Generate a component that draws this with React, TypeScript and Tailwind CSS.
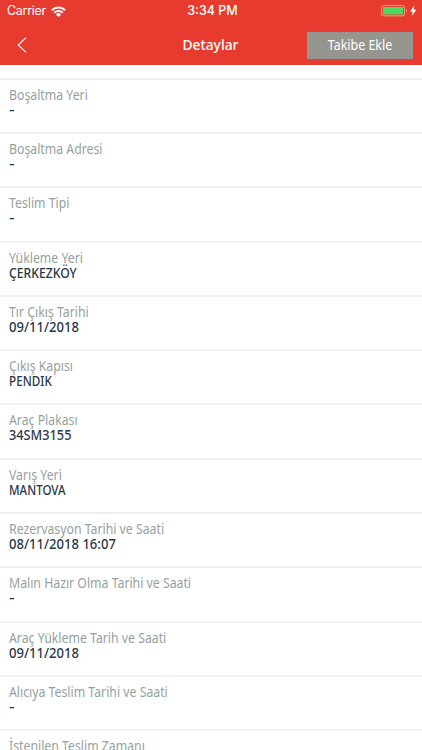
import { ReactNode } from 'react'
import clsx from 'clsx'

interface DetailItem {
  label: string
  value: string
  valueClass?: string
}

const DATE = 'scale-x-[0.935]'
const EMPTY = 'scale-x-[1.25]'

const details: DetailItem[] = [
  { label: 'Boşaltma Yeri', value: '-', valueClass: EMPTY },
  { label: 'Boşaltma Adresi', value: '-', valueClass: EMPTY },
  { label: 'Teslim Tipi', value: '-', valueClass: EMPTY },
  { label: 'Yükleme Yeri', value: 'ÇERKEZKÖY', valueClass: 'scale-x-[0.87]' },
  { label: 'Tır Çıkış Tarihi', value: '09/11/2018', valueClass: DATE },
  { label: 'Çıkış Kapısı', value: 'PENDIK', valueClass: 'scale-x-[0.835]' },
  { label: 'Araç Plakası', value: '34SM3155', valueClass: 'scale-x-[0.91]' },
  { label: 'Varış Yeri', value: 'MANTOVA', valueClass: 'scale-x-[0.825]' },
  { label: 'Rezervasyon Tarihi ve Saati', value: '08/11/2018 16:07', valueClass: DATE },
  { label: 'Malın Hazır Olma Tarihi ve Saati', value: '-', valueClass: EMPTY },
  { label: 'Araç Yükleme Tarih ve Saati', value: '09/11/2018', valueClass: DATE },
  { label: 'Alıcıya Teslim Tarihi ve Saati', value: '-', valueClass: EMPTY },
  { label: 'İstenilen Teslim Zamanı', value: '-', valueClass: EMPTY },
]

function WifiIcon() {
  return (
    <svg width="15" height="11" viewBox="0 0 15 11" fill="none" stroke="white" strokeWidth="2.1">
      <path d="M.9 4.2a9.3 9.3 0 0 1 13.2 0" />
      <path d="M3.3 6.8a5.9 5.9 0 0 1 8.4 0" />
      <path d="M7.5 11 5 8.4a3.5 3.5 0 0 1 5 0z" fill="white" stroke="none" />
    </svg>
  )
}

function BatteryIcon() {
  return (
    <svg width="37" height="12" viewBox="0 0 37 12" fill="none">
      <rect x="0.5" y="0.5" width="23" height="10.4" rx="2.3" stroke="#f6a77f" />
      <rect x="2" y="2" width="20" height="7.4" rx="1" fill="#4cd964" />
      <path d="M25 3.8c1.1.4 1.1 3.4 0 3.8z" fill="#f6a77f" />
      <path d="M33.4.4 29.1 6.4h2.6L30.8 11l4.6-6.2h-2.7z" fill="white" />
    </svg>
  )
}

function StatusBar() {
  return (
    <div className="grid h-[22px] grid-cols-3 items-center pr-[4px] pl-[7px] font-['Inter',sans-serif] text-[12.5px] text-white">
      <div className="flex items-center gap-[4px]">
        <span className="w-[40px] pt-px tracking-[-0.3px]">Carrier</span>
        <WifiIcon />
      </div>
      <span className="pt-px text-center font-medium">3:34 PM</span>
      <div className="flex justify-end">
        <BatteryIcon />
      </div>
    </div>
  )
}

function Header({ children }: { children: ReactNode }) {
  return (
    <header className="h-[65px] shrink-0 bg-[#e63b2e]">
      <StatusBar />
      <div className="grid h-[43px] grid-cols-[1fr_auto_1fr] items-center pt-[3px] pr-[9px] pl-[17px] text-white">
        <button type="button" aria-label="Geri" className="w-fit">
          <svg width="10" height="16" viewBox="0 0 10 16" fill="none" stroke="white" strokeWidth="1.1">
            <path d="M9 .6 1.2 8 9 15.4" />
          </svg>
        </button>
        <h1 className="-mt-px mr-[10px] scale-x-[0.92] text-[15px] font-medium">{children}</h1>
        <button type="button" className="h-[27px] w-[106px] justify-self-end bg-[#979590] text-[14px]">
          <span className="block scale-x-[0.89] pb-px">Takibe Ekle</span>
        </button>
      </div>
    </header>
  )
}

function DetailRow({ label, value, valueClass }: DetailItem) {
  return (
    <div className="h-[54.3px] shrink-0 border-t-2 border-[#eff1f1] pt-[7px] pl-[9px] text-[14px] leading-[15px]">
      <dt className="w-fit origin-left scale-x-[0.877] text-[#95a1a1]">{label}</dt>
      <dd className={clsx('w-fit origin-left font-medium text-[#2a3748]', valueClass)}>{value}</dd>
    </div>
  )
}

export default function App() {
  return (
    <div className="flex h-[750px] w-[422px] flex-col overflow-hidden bg-white font-['Noto_Sans',sans-serif]">
      <Header>Detaylar</Header>
      <dl className="flex min-h-0 flex-1 flex-col overflow-hidden pt-[12.7px]">
        {details.map((item) => (
          <DetailRow key={item.label} {...item} />
        ))}
      </dl>
    </div>
  )
}
